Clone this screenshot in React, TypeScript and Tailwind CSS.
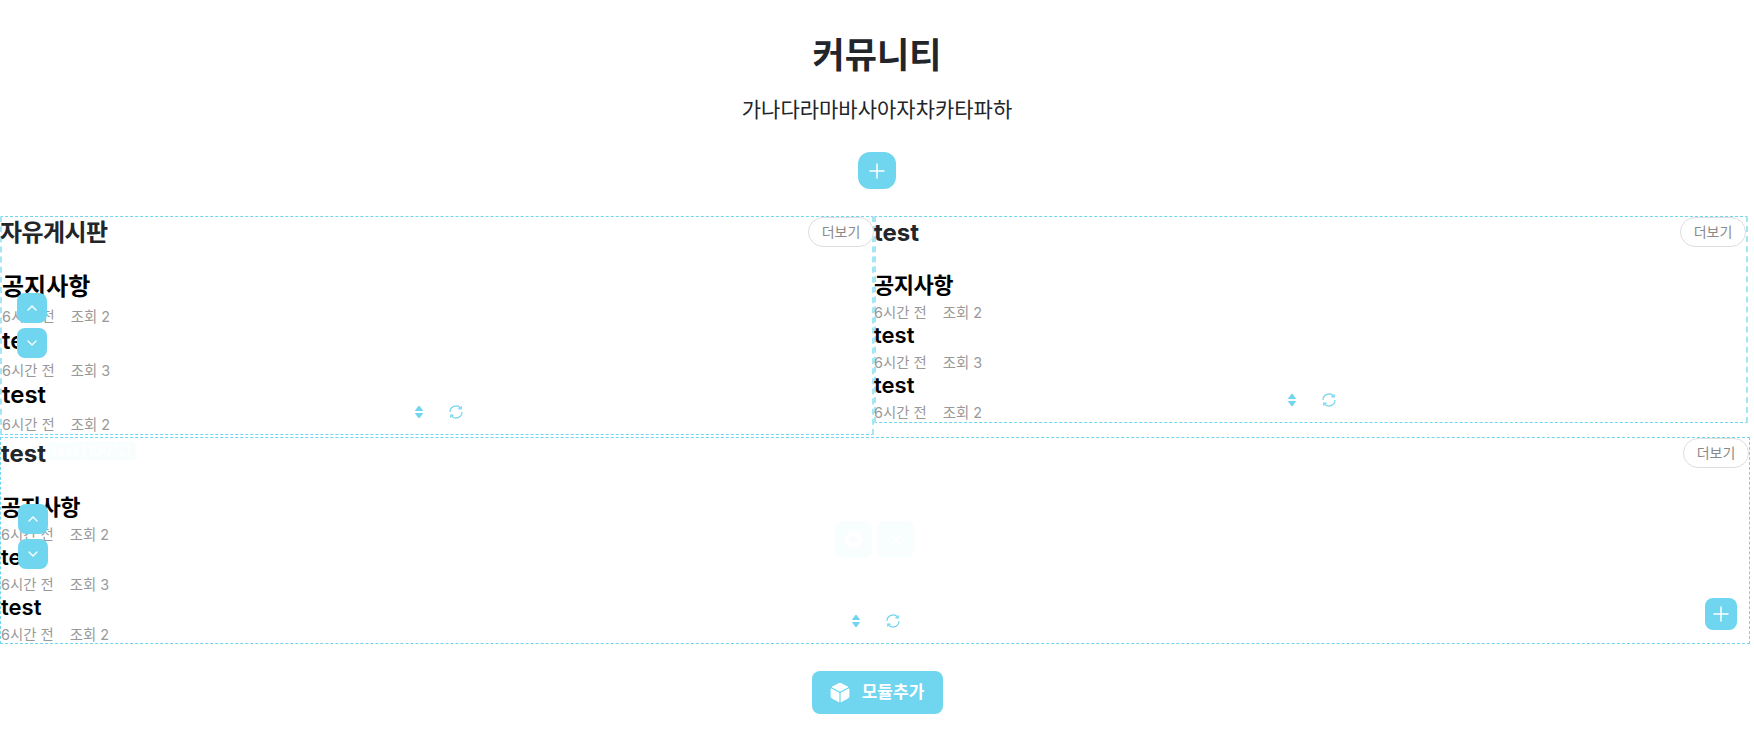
import { ChevronDown, ChevronUp, Plus, X } from "lucide-react";

type ModuleProps = {
  title: string;
  boxClass: string;
  titleClass: string;
  moreClass: string;
  headClass: string;
  itemClass: string;
  rowTitleClass: string;
  upDownClass: string;
  toolsClass: string;
  children?: React.ReactNode;
};

const rows = [
  { title: "공지사항", views: 2 },
  { title: "test", views: 3 },
  { title: "test", views: 2 },
];

function SortIcon() {
  return (
    <svg width="10" height="14" viewBox="0 0 10 14" fill="#70d5ee" stroke="#70d5ee" strokeWidth="1" strokeLinejoin="round">
      <path d="M5 1 L8.5 5.5 L1.5 5.5 Z" />
      <path d="M5 13 L8.5 8.5 L1.5 8.5 Z" />
    </svg>
  );
}

function RefreshIcon() {
  return (
    <svg width="14" height="14" viewBox="0 0 14 14" fill="none" stroke="#70d5ee" strokeWidth="1.2">
      <path d="M1 7 A6 6 0 0 1 11.6 3.2" />
      <path d="M13 7 A6 6 0 0 1 2.4 10.8" />
      <path d="M12.4 1.4 L12 4 L9.4 3.6" />
      <path d="M1.6 12.6 L2 10 L4.6 10.4" />
    </svg>
  );
}

function CubeIcon() {
  return (
    <svg width="20" height="21" viewBox="0 0 20 21" fill="#fff" stroke="#fff" strokeWidth="0.8" strokeLinejoin="round">
      <path d="M10 1 L18 5 L10 9.2 L2 5 Z" />
      <path d="M1 6.8 L9 11 L9 20 L2 16 Q1 15.6 1 14.8 Z" />
      <path d="M19 6.8 L11 11 L11 20 L18 16 Q19 15.6 19 14.8 Z" />
    </svg>
  );
}

function Module({ title, boxClass, titleClass, moreClass, headClass, itemClass, rowTitleClass, upDownClass, toolsClass, children }: ModuleProps) {
  return (
    <div className={`relative border-y border-dashed border-[#70d5ee] ${boxClass}`}>
      <div className="flex items-start justify-between">
        <h3 className={`text-2xl leading-[31px] font-bold text-[#222529] ${titleClass}`}>{title}</h3>
        <button className={`h-[30px] w-[66px] rounded-full border border-[#dedede] bg-white text-sm text-[#8a8a8a] ${moreClass}`}>
          더보기
        </button>
      </div>
      <ul className={headClass}>
        {rows.map((row, index) => (
          <li key={index}>
            <h4 className={`font-semibold text-black ${itemClass} ${index === 0 ? rowTitleClass : ""}`}>{row.title}</h4>
            <p className="mt-[6px] flex gap-4 text-[14.4px] leading-[18px] text-[#999]">
              <span>6시간 전</span>
              <span>조회 {row.views}</span>
            </p>
          </li>
        ))}
      </ul>
      <div className={`absolute flex flex-col gap-[5px] ${upDownClass}`}>
        <button className="flex h-[30px] w-[30px] items-center justify-center rounded-lg bg-[#70d5ee] text-white">
          <ChevronUp size={16} />
        </button>
        <button className="flex h-[30px] w-[30px] items-center justify-center rounded-lg bg-[#70d5ee] text-white">
          <ChevronDown size={16} />
        </button>
      </div>
      <div className={`absolute flex items-center gap-[25px] ${toolsClass}`}>
        <SortIcon />
        <RefreshIcon />
      </div>
      {children}
    </div>
  );
}

export default function App() {
  return (
    <div className="h-[730px] overflow-hidden bg-white font-['Inter','Noto_Sans_CJK_KR',sans-serif]">
      <section className="flex flex-col items-center pt-[29px]">
        <h1 className="text-[35px] leading-[52px] font-bold text-[#222529]">커뮤니티</h1>
        <p className="mt-[15px] text-[21px] leading-[28px] text-[#222529]">가나다라마바사아자차카타파하</p>
        <button className="mt-[28px] flex h-[37px] w-[38px] items-center justify-center rounded-xl bg-[#70d5ee] text-white">
          <Plus size={24} strokeWidth={1.5} />
        </button>
      </section>

      <div className="mt-[27px] flex items-start">
        <Module
          title="자유게시판"
          boxClass="h-[219px] w-[874px] border-x-2 border-x-[#a5e6f6]"
          titleClass="-ml-[2px] tracking-[-0.6px]"
          moreClass="-mr-[2px]"
          headClass="mt-[24px]"
          itemClass="text-2xl leading-[30px]"
          rowTitleClass=""
          upDownClass="left-[15px] top-[76px]"
          toolsClass="left-[412px] top-[188px]"
        />
        <Module
          title="test"
          boxClass="h-[207px] w-[874px] border-x-2 border-x-[#a5e6f6]"
          titleClass="-ml-[2px]"
          moreClass=""
          headClass="mt-[24px] -ml-[2px]"
          itemClass="text-[22px] leading-[26px]"
          rowTitleClass="tracking-[-0.5px]"
          upDownClass="hidden"
          toolsClass="left-[411px] top-[176px]"
        />
      </div>

      <div className="mt-[2px]">
        <Module
          title="test"
          boxClass="h-[207px] w-[1750px] border-x"
          titleClass=""
          moreClass=""
          headClass="mt-[25px]"
          itemClass="text-[22px] leading-[26px]"
          rowTitleClass="tracking-[-0.5px]"
          upDownClass="left-[17px] top-[66px]"
          toolsClass="left-[850px] top-[176px]"
        >
          <span className="absolute left-[46px] top-[4px] rounded bg-[#f8fdfe] px-[5px] text-sm leading-[18px] font-bold text-white">
            test (100%)
          </span>
          <div className="absolute left-[834px] top-[83px] flex gap-[5px]">
            <span className="flex h-[37px] w-[37px] items-center justify-center rounded-lg bg-[#f8fdfe] text-white">
              <span className="h-[17px] w-[17px] rounded-full border-[5px] border-white" />
            </span>
            <span className="flex h-[37px] w-[37px] items-center justify-center rounded-lg bg-[#f8fdfe] text-white">
              <X size={18} />
            </span>
          </div>
          <button className="absolute bottom-[13px] right-[12px] flex h-[32px] w-[32px] items-center justify-center rounded-lg bg-[#70d5ee] text-white">
            <Plus size={24} strokeWidth={1.5} />
          </button>
        </Module>
      </div>

      <div className="mt-[27px] flex justify-center">
        <button className="flex h-[43px] w-[131px] items-center justify-center gap-[12px] rounded-lg bg-[#70d5ee] text-[17px] font-bold text-white">
          <CubeIcon />
          모듈추가
        </button>
      </div>
    </div>
  );
}
